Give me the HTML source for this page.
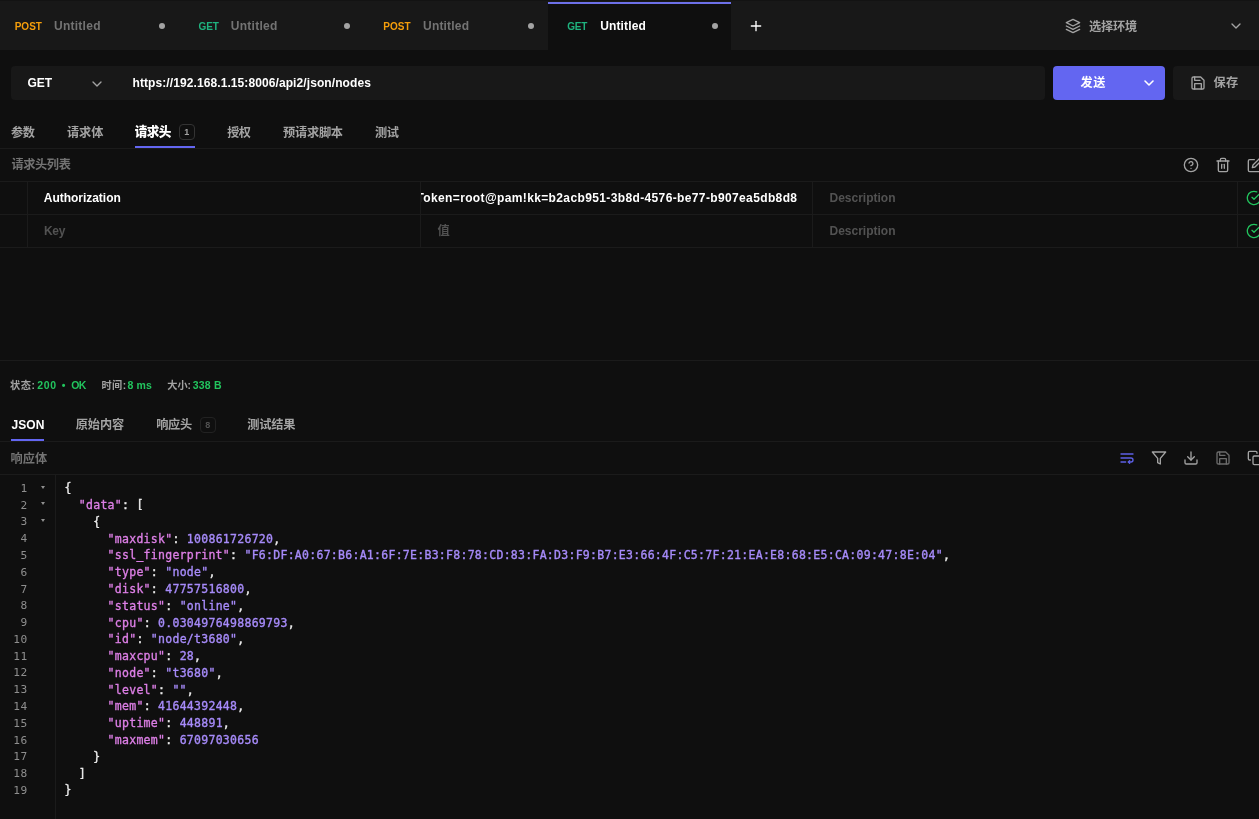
<!DOCTYPE html>
<html lang="zh-CN">
<head>
<meta charset="utf-8">
<title>API Client</title>
<style>
*{box-sizing:border-box;margin:0;padding:0}
html,body{width:1259px;height:819px;overflow:hidden;background:#0f0f0f;color:#fff;
  font-family:"Liberation Sans","Noto Sans CJK SC",sans-serif;font-size:12px}
#root{position:relative;width:1259px;height:819px;overflow:hidden;background:#0f0f0f;will-change:transform}
#root>*{position:absolute}
#tabbar{left:0;top:0;width:1259px;height:50px;background:#181818;border-top:1px solid #131313}
#acttab{left:548px;top:2px;width:183px;height:48px;background:#0f0f0f;border-top:2px solid #6d70e8}
.dot{width:6px;height:6px;border-radius:50%;background:#a3a3a3}
#urlbox{left:11px;top:66px;width:1034px;height:34px;background:#181818;border-radius:4px}
#sendb{left:1053px;top:66px;width:112px;height:34px;background:#6366f1;border-radius:4px}
#saveb{left:1173px;top:66px;width:100px;height:34px;background:#181818;border-radius:4px}
.hl{left:0;width:1259px;height:1px;background:#1b1b1b}
.vl{width:1px;background:#1b1b1b}
.ul{height:2px;background:#6366f1}
.badge{width:16px;height:16px;border:1px solid #333;border-radius:4px}
.txt{white-space:nowrap;line-height:20px;height:20px}
svg.ic{width:16px;height:16px;fill:none;stroke:#a3a3a3;stroke-width:2;stroke-linecap:round;stroke-linejoin:round;overflow:visible}
#valclip{left:421px;top:182px;width:391px;height:32px;overflow:hidden}
#valtxt{position:absolute;right:14.6px;top:5.7px;white-space:nowrap;line-height:20px;font-size:12px;font-weight:700;color:#fff;letter-spacing:0.37px}
#code{left:0;top:480.3px;width:1259px;font-family:"DejaVu Sans Mono","Liberation Mono",monospace;font-size:11.5px;letter-spacing:0.277px;line-height:16.79px}
#code .r{position:relative;height:16.79px;white-space:pre}
#code .n{position:absolute;left:0;top:0.6px;width:27.6px;text-align:right;color:#8e8e8e;font-size:11.2px;letter-spacing:0.4px}
#code .f{position:absolute;left:40.7px;top:5.4px;width:0;height:0;border-left:2.4px solid transparent;border-right:2.4px solid transparent;border-top:3.4px solid #8f8f8f}
#code .c{position:absolute;left:64.4px;color:#ececec;-webkit-text-stroke:0.35px currentColor}
.k{color:#dd7fe6}.s{color:#a78bfa}
</style>
</head>
<body>
<div id="root">
<div id="tabbar"></div>
<div id="acttab"></div>
<div class="dot" style="left:159px;top:23px"></div>
<div class="dot" style="left:343.8px;top:23px"></div>
<div class="dot" style="left:527.9px;top:23px"></div>
<div class="dot" style="left:711.9px;top:23px"></div>
<svg class="ic" style="left:747.5px;top:18px;stroke:#fff" viewBox="0 0 24 24"><line x1="12" y1="5" x2="12" y2="19"/><line x1="5" y1="12" x2="19" y2="12"/></svg>
<svg class="ic" style="left:1065px;top:18px" viewBox="0 0 24 24"><polygon points="12 2 2 7 12 12 22 7 12 2"/><polyline points="2 17 12 22 22 17"/><polyline points="2 12 12 17 22 12"/></svg>
<svg class="ic" style="left:1228.3px;top:18.3px" viewBox="0 0 24 24"><polyline points="6 9 12 15 18 9"/></svg>

<div id="urlbox"></div>
<svg class="ic" style="left:89.2px;top:75.6px" viewBox="0 0 24 24"><polyline points="6 9 12 15 18 9"/></svg>
<div id="sendb"></div>
<svg class="ic" style="left:1141px;top:75px;stroke:#fff;stroke-width:2.4" viewBox="0 0 24 24"><polyline points="6 9 12 15 18 9"/></svg>
<div id="saveb"></div>
<svg class="ic" style="left:1190px;top:75px" viewBox="0 0 24 24"><path d="M19 21H5a2 2 0 0 1-2-2V5a2 2 0 0 1 2-2h11l5 5v11a2 2 0 0 1-2 2z"/><polyline points="17 21 17 13 7 13 7 21"/><polyline points="7 3 7 8 15 8"/></svg>

<div class="ul" style="left:135px;top:146px;width:60px"></div>
<div class="hl" style="top:148px"></div>
<div class="badge" style="left:179px;top:124px"></div>
<svg class="ic" style="left:1183px;top:157px" viewBox="0 0 24 24"><circle cx="12" cy="12" r="10"/><path d="M9.09 9a3 3 0 0 1 5.83 1c0 2-3 3-3 3"/><line x1="12" y1="17" x2="12.01" y2="17"/></svg>
<svg class="ic" style="left:1215px;top:157px" viewBox="0 0 24 24"><path d="M3 6h18"/><path d="M19 6v14c0 1-1 2-2 2H7c-1 0-2-1-2-2V6"/><path d="M8 6V4c0-1 1-2 2-2h4c1 0 2 1 2 2v2"/><line x1="10" y1="11" x2="10" y2="17"/><line x1="14" y1="11" x2="14" y2="17"/></svg>
<svg class="ic" style="left:1247px;top:157px" viewBox="0 0 24 24"><path d="M11 4H4a2 2 0 0 0-2 2v14a2 2 0 0 0 2 2h14a2 2 0 0 0 2-2v-7"/><path d="M18.5 2.5a2.121 2.121 0 0 1 3 3L12 15l-4 1 1-4 9.5-9.5z"/></svg>
<div class="hl" style="top:181px"></div>
<div class="hl" style="top:214px"></div>
<div class="hl" style="top:247px"></div>
<div class="vl" style="left:27px;top:181px;height:66px"></div>
<div class="vl" style="left:420px;top:181px;height:66px"></div>
<div class="vl" style="left:812px;top:181px;height:66px"></div>
<div class="vl" style="left:1237px;top:181px;height:66px"></div>
<div id="valclip"><span id="valtxt">PVEAPIToken=root@pam!kk=b2acb951-3b8d-4576-be77-b907ea5db8d8</span></div>
<svg class="ic" style="left:1246px;top:190px;stroke:#22c55e" viewBox="0 0 24 24"><path d="M22 11.08V12a10 10 0 1 1-5.93-9.14"/><polyline points="22 4 12 14.01 9 11.01"/></svg>
<svg class="ic" style="left:1246px;top:223px;stroke:#22c55e" viewBox="0 0 24 24"><path d="M22 11.08V12a10 10 0 1 1-5.93-9.14"/><polyline points="22 4 12 14.01 9 11.01"/></svg>

<div class="hl" style="top:360px"></div>
<div class="ul" style="left:11px;top:439px;width:33px"></div>
<div class="hl" style="top:441px"></div>
<div class="badge" style="left:200px;top:417px;border-color:#222"></div>
<svg class="ic" style="left:1119px;top:450px;stroke:#5d60e6" viewBox="0 0 24 24"><line x1="3" y1="6" x2="21" y2="6"/><path d="M3 12h15a3 3 0 1 1 0 6h-4"/><polyline points="16 16 14 18 16 20"/><line x1="3" y1="18" x2="10" y2="18"/></svg>
<svg class="ic" style="left:1151px;top:450px" viewBox="0 0 24 24"><polygon points="22 3 2 3 10 12.46 10 19 14 21 14 12.46 22 3"/></svg>
<svg class="ic" style="left:1183px;top:450px" viewBox="0 0 24 24"><path d="M21 15v4a2 2 0 0 1-2 2H5a2 2 0 0 1-2-2v-4"/><polyline points="7 10 12 15 17 10"/><line x1="12" y1="15" x2="12" y2="3"/></svg>
<svg class="ic" style="left:1215px;top:450px;stroke:#6b6b6b" viewBox="0 0 24 24"><path d="M19 21H5a2 2 0 0 1-2-2V5a2 2 0 0 1 2-2h11l5 5v11a2 2 0 0 1-2 2z"/><polyline points="17 21 17 13 7 13 7 21"/><polyline points="7 3 7 8 15 8"/></svg>
<svg class="ic" style="left:1247px;top:450px" viewBox="0 0 24 24"><rect x="9" y="9" width="13" height="13" rx="2" ry="2"/><path d="M5 15H4a2 2 0 0 1-2-2V4a2 2 0 0 1 2-2h9a2 2 0 0 1 2 2v1"/></svg>
<div class="hl" style="top:474px"></div>
<div class="vl" style="left:55px;top:475px;height:344px"></div>
<span class="txt" id="t1m" style="left:14.70px;top:17.30px;font-size:10px;font-weight:700;color:#f59e0b;letter-spacing:0.000px;">POST</span>
<span class="txt" id="t1t" style="left:54.00px;top:15.50px;font-size:12px;font-weight:700;color:#737373;letter-spacing:0.257px;">Untitled</span>
<span class="txt" id="t2m" style="left:198.60px;top:17.30px;font-size:10px;font-weight:700;color:#1fb37f;letter-spacing:-0.100px;">GET</span>
<span class="txt" id="t2t" style="left:230.70px;top:15.50px;font-size:12px;font-weight:700;color:#737373;letter-spacing:0.286px;">Untitled</span>
<span class="txt" id="t3m" style="left:383.15px;top:17.30px;font-size:10px;font-weight:700;color:#f59e0b;letter-spacing:0.100px;">POST</span>
<span class="txt" id="t3t" style="left:423.05px;top:15.50px;font-size:12px;font-weight:700;color:#737373;letter-spacing:0.186px;">Untitled</span>
<span class="txt" id="t4m" style="left:567.25px;top:17.30px;font-size:10px;font-weight:700;color:#1fb37f;letter-spacing:-0.250px;">GET</span>
<span class="txt" id="t4t" style="left:600.15px;top:15.50px;font-size:12px;font-weight:700;color:#ffffff;letter-spacing:0.157px;">Untitled</span>
<span class="txt" id="env" style="left:1089.05px;top:16.60px;font-size:12.2px;font-weight:700;color:#a3a3a3;letter-spacing:-0.233px;">选择环境</span>
<span class="txt" id="meth" style="left:27.45px;top:72.60px;font-size:12px;font-weight:700;color:#ffffff;letter-spacing:-0.050px;">GET</span>
<span class="txt" id="url" style="left:132.50px;top:72.60px;font-size:12px;font-weight:700;color:#ffffff;letter-spacing:0.090px;">https://192.168.1.15:8006/api2/json/nodes</span>
<span class="txt" id="send" style="left:1080.45px;top:73.00px;font-size:12.2px;font-weight:700;color:#ffffff;letter-spacing:0.600px;">发送</span>
<span class="txt" id="save" style="left:1213.50px;top:73.00px;font-size:12.2px;font-weight:700;color:#a3a3a3;letter-spacing:0.400px;">保存</span>
<span class="txt" id="rt1" style="left:11.05px;top:122.50px;font-size:12.2px;font-weight:700;color:#a3a3a3;letter-spacing:-0.500px;">参数</span>
<span class="txt" id="rt2" style="left:67.00px;top:122.50px;font-size:12.2px;font-weight:700;color:#a3a3a3;letter-spacing:-0.100px;">请求体</span>
<span class="txt" id="rt3" style="left:134.70px;top:122.00px;font-size:12.6px;font-weight:900;color:#ffffff;letter-spacing:-0.600px;">请求头</span>
<span class="txt" id="rt3b" style="left:184.30px;top:122.30px;font-size:9px;font-weight:700;color:#a3a3a3;letter-spacing:0.000px;">1</span>
<span class="txt" id="rt4" style="left:227.20px;top:122.50px;font-size:12.2px;font-weight:700;color:#a3a3a3;letter-spacing:-0.600px;">授权</span>
<span class="txt" id="rt5" style="left:283.10px;top:122.50px;font-size:12.2px;font-weight:700;color:#a3a3a3;letter-spacing:-0.250px;">预请求脚本</span>
<span class="txt" id="rt6" style="left:375.05px;top:122.50px;font-size:12.2px;font-weight:700;color:#a3a3a3;letter-spacing:-0.500px;">测试</span>
<span class="txt" id="hl" style="left:11.50px;top:155.30px;font-size:12.2px;font-weight:700;color:#737373;letter-spacing:-0.400px;">请求头列表</span>
<span class="txt" id="auth" style="left:43.75px;top:187.70px;font-size:12px;font-weight:700;color:#ffffff;letter-spacing:-0.025px;">Authorization</span>
<span class="txt" id="key" style="left:43.90px;top:220.70px;font-size:12px;font-weight:700;color:#525252;letter-spacing:-0.300px;">Key</span>
<span class="txt" id="val" style="left:437.55px;top:220.80px;font-size:12.2px;font-weight:700;color:#525252;letter-spacing:0.000px;">值</span>
<span class="txt" id="d1" style="left:829.50px;top:187.70px;font-size:12px;font-weight:700;color:#525252;letter-spacing:0.000px;">Description</span>
<span class="txt" id="d2" style="left:829.50px;top:220.70px;font-size:12px;font-weight:700;color:#525252;letter-spacing:0.000px;">Description</span>
<span class="txt" id="s1" style="left:10.00px;top:375.60px;font-size:10.2px;font-weight:700;color:#a3a3a3;letter-spacing:0.600px;">状态:</span>
<span class="txt" id="s2" style="left:37.25px;top:375.00px;font-size:10.5px;font-weight:700;color:#22c55e;letter-spacing:0.600px;">200</span>
<span class="txt" id="s3" style="left:61.80px;top:375.00px;font-size:10.5px;font-weight:700;color:#22c55e;letter-spacing:0.000px;">•</span>
<span class="txt" id="s4" style="left:71.15px;top:375.00px;font-size:10.5px;font-weight:700;color:#22c55e;letter-spacing:-0.600px;">OK</span>
<span class="txt" id="s5" style="left:101.45px;top:375.60px;font-size:10.2px;font-weight:700;color:#a3a3a3;letter-spacing:0.450px;">时间:</span>
<span class="txt" id="s6" style="left:127.40px;top:375.00px;font-size:10.5px;font-weight:700;color:#22c55e;letter-spacing:0.133px;">8 ms</span>
<span class="txt" id="s7" style="left:167.30px;top:375.60px;font-size:10.2px;font-weight:700;color:#a3a3a3;letter-spacing:-0.100px;">大小:</span>
<span class="txt" id="s8" style="left:192.70px;top:375.00px;font-size:10.5px;font-weight:700;color:#22c55e;letter-spacing:0.250px;">338 B</span>
<span class="txt" id="pt1" style="left:11.45px;top:414.50px;font-size:12px;font-weight:700;color:#ffffff;letter-spacing:0.100px;">JSON</span>
<span class="txt" id="pt2" style="left:75.75px;top:415.00px;font-size:12.2px;font-weight:700;color:#a3a3a3;letter-spacing:-0.100px;">原始内容</span>
<span class="txt" id="pt3" style="left:156.25px;top:415.00px;font-size:12.2px;font-weight:700;color:#a3a3a3;letter-spacing:-0.350px;">响应头</span>
<span class="txt" id="pt3b" style="left:205.30px;top:415.20px;font-size:9px;font-weight:700;color:#525252;letter-spacing:0.000px;">8</span>
<span class="txt" id="pt4" style="left:247.20px;top:415.00px;font-size:12.2px;font-weight:700;color:#a3a3a3;letter-spacing:-0.133px;">测试结果</span>
<span class="txt" id="rb" style="left:10.45px;top:448.80px;font-size:12.2px;font-weight:700;color:#737373;letter-spacing:0.150px;">响应体</span>
<div id="code">
<div class="r"><span class="n">1</span><i class="f"></i><span class="c">{</span></div>
<div class="r"><span class="n">2</span><i class="f"></i><span class="c">  <span class="k">&quot;data&quot;</span>: [</span></div>
<div class="r"><span class="n">3</span><i class="f"></i><span class="c">    {</span></div>
<div class="r"><span class="n">4</span><span class="c">      <span class="k">&quot;maxdisk&quot;</span>: <span class="s">100861726720</span>,</span></div>
<div class="r"><span class="n">5</span><span class="c">      <span class="k">&quot;ssl_fingerprint&quot;</span>: <span class="s">&quot;F6:DF:A0:67:B6:A1:6F:7E:B3:F8:78:CD:83:FA:D3:F9:B7:E3:66:4F:C5:7F:21:EA:E8:68:E5:CA:09:47:8E:04&quot;</span>,</span></div>
<div class="r"><span class="n">6</span><span class="c">      <span class="k">&quot;type&quot;</span>: <span class="s">&quot;node&quot;</span>,</span></div>
<div class="r"><span class="n">7</span><span class="c">      <span class="k">&quot;disk&quot;</span>: <span class="s">47757516800</span>,</span></div>
<div class="r"><span class="n">8</span><span class="c">      <span class="k">&quot;status&quot;</span>: <span class="s">&quot;online&quot;</span>,</span></div>
<div class="r"><span class="n">9</span><span class="c">      <span class="k">&quot;cpu&quot;</span>: <span class="s">0.0304976498869793</span>,</span></div>
<div class="r"><span class="n">10</span><span class="c">      <span class="k">&quot;id&quot;</span>: <span class="s">&quot;node/t3680&quot;</span>,</span></div>
<div class="r"><span class="n">11</span><span class="c">      <span class="k">&quot;maxcpu&quot;</span>: <span class="s">28</span>,</span></div>
<div class="r"><span class="n">12</span><span class="c">      <span class="k">&quot;node&quot;</span>: <span class="s">&quot;t3680&quot;</span>,</span></div>
<div class="r"><span class="n">13</span><span class="c">      <span class="k">&quot;level&quot;</span>: <span class="s">&quot;&quot;</span>,</span></div>
<div class="r"><span class="n">14</span><span class="c">      <span class="k">&quot;mem&quot;</span>: <span class="s">41644392448</span>,</span></div>
<div class="r"><span class="n">15</span><span class="c">      <span class="k">&quot;uptime&quot;</span>: <span class="s">448891</span>,</span></div>
<div class="r"><span class="n">16</span><span class="c">      <span class="k">&quot;maxmem&quot;</span>: <span class="s">67097030656</span></span></div>
<div class="r"><span class="n">17</span><span class="c">    }</span></div>
<div class="r"><span class="n">18</span><span class="c">  ]</span></div>
<div class="r"><span class="n">19</span><span class="c">}</span></div>
</div>
</div>
</body>
</html>
